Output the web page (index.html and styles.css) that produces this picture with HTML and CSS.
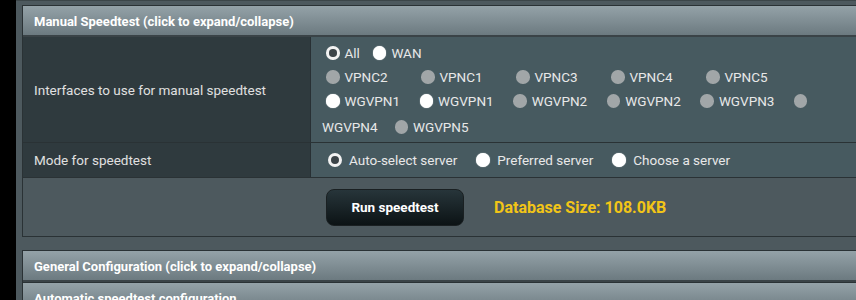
FILE: index.html
```html
<!DOCTYPE html>
<html lang="en">
<head>
    <meta charset="UTF-8">
    <title>Speedtest</title>
    <link rel="stylesheet" href="styles.css">
</head>
<body>
<div class="page">
    <div class="side"></div>
    <div class="content">

        <div class="panel">
            <div class="panel-head">Manual Speedtest (click to expand/collapse)</div>
            <div class="row">
                <div class="label">Interfaces to use for manual speedtest</div>
                <div class="value lines">
                    <div class="line">
                        <span class="opt"><span class="radio checked"></span>All</span>
                        <span class="opt"><span class="radio on"></span>WAN</span>
                    </div>
                    <div class="line">
                        <span class="opt wide"><span class="radio off"></span>VPNC2</span>
                        <span class="opt wide"><span class="radio off"></span>VPNC1</span>
                        <span class="opt wide"><span class="radio off"></span>VPNC3</span>
                        <span class="opt wide"><span class="radio off"></span>VPNC4</span>
                        <span class="opt wide"><span class="radio off"></span>VPNC5</span>
                    </div>
                    <div class="line">
                        <span class="opt wg"><span class="radio on"></span>WGVPN1</span>
                        <span class="opt wg"><span class="radio on"></span>WGVPN1</span>
                        <span class="opt wg"><span class="radio off"></span>WGVPN2</span>
                        <span class="opt wg"><span class="radio off"></span>WGVPN2</span>
                        <span class="opt wg"><span class="radio off"></span>WGVPN3</span>
                        <span class="opt"><span class="radio off"></span></span>
                    </div>
                    <div class="line back">
                        <span class="opt tail">WGVPN4</span>
                        <span class="opt"><span class="radio off"></span>WGVPN5</span>
                    </div>
                </div>
            </div>
            <div class="row">
                <div class="label">Mode for speedtest</div>
                <div class="value single">
                    <span class="opt mode"><span class="radio checked"></span>Auto-select server</span>
                    <span class="opt mode"><span class="radio on"></span>Preferred server</span>
                    <span class="opt mode"><span class="radio on"></span>Choose a server</span>
                </div>
            </div>
            <div class="actions">
                <button class="btn">Run speedtest</button>
                <span class="dbsize">Database Size: 108.0KB</span>
            </div>
        </div>

        <div class="panel second">
            <div class="panel-head">General Configuration (click to expand/collapse)</div>
            <div class="panel-head sub">Automatic speedtest configuration</div>
        </div>

    </div>
</div>
</body>
</html>
```

FILE: styles.css
```css
* {
    box-sizing: border-box;
    margin: 0;
    padding: 0;
}

body {
    font-family: Roboto, 'Liberation Sans', sans-serif;
    font-size: 13.5px;
    background: #4d595e;
    color: #e8e8e8;
    overflow: hidden;
}

.page {
    display: flex;
    min-height: 100vh;
}

.side {
    width: 16px;
    flex-shrink: 0;
    background: #000;
}

.content {
    flex: 1;
    padding: 4px 0 0 6px;
    border-top: 1px solid #3c4649;
}

.panel {
    border: 1px solid #2a3235;
    border-right: none;
    background: #4d595e;
}

.panel.second {
    margin-top: 13px;
}

.panel-head {
    height: 31px;
    line-height: 31px;
    padding-left: 11px;
    font-size: 13px;
    font-weight: bold;
    color: #fff;
    background: linear-gradient(#94a2a8, #6c7a80);
    border-bottom: 2px solid #3a4347;
}

.panel-head.sub {
    border-top: 1px solid #2a3235;
}

.row {
    display: flex;
    border-bottom: 1px solid #2a3235;
}

.label {
    width: 288px;
    flex-shrink: 0;
    padding-left: 11px;
    background: #2f3a3e;
    color: #e0e0e0;
    display: flex;
    align-items: center;
    border-right: 1px solid #283034;
}

.value {
    flex: 1;
    background: #475a60;
    padding-left: 15px;
}

.lines {
    padding-top: 4px;
    padding-bottom: 3px;
}

.line {
    height: 24px;
    display: flex;
    align-items: center;
    white-space: nowrap;
}

.line.back {
    margin-left: -4px;
    height: 26px;
    padding-top: 2px;
}

.single {
    height: 34px;
    display: flex;
    align-items: center;
}

.opt {
    display: inline-flex;
    align-items: center;
    margin-right: 13px;
}

.opt.wide {
    width: 95px;
    margin-right: 0;
}

.opt.wg {
    width: 93.6px;
    margin-right: 0;
}

.opt.tail {
    margin-right: 17px;
}

.opt.mode {
    margin-right: 19px;
}

.opt.mode:first-child {
    margin-left: 2px;
}

.opt.mode .radio {
    width: 14px;
    height: 14px;
    margin-right: 7px;
}

.radio {
    display: inline-block;
    width: 13.5px;
    height: 13.5px;
    border-radius: 50%;
    margin-right: 5px;
}

.radio.checked {
    background: #3c4448;
    border: 3px solid #f2f2f2;
}

.radio.on {
    background: #fff;
    box-shadow: 0 0 1px #fff;
}

.radio.off {
    background: #a1a6a8;
}

.actions {
    height: 58px;
    display: flex;
    align-items: center;
    padding-left: 303px;
}

.btn {
    width: 138px;
    height: 37px;
    border: 1px solid #1a2022;
    border-radius: 8px;
    background: linear-gradient(#27353a, #0c1315);
    color: #fff;
    font-family: Roboto, 'Liberation Sans', sans-serif;
    font-size: 13.5px;
    font-weight: bold;
    cursor: pointer;
}

.dbsize {
    margin-left: 30px;
    color: #f2c517;
    font-weight: bold;
    font-size: 16px;
}
```
